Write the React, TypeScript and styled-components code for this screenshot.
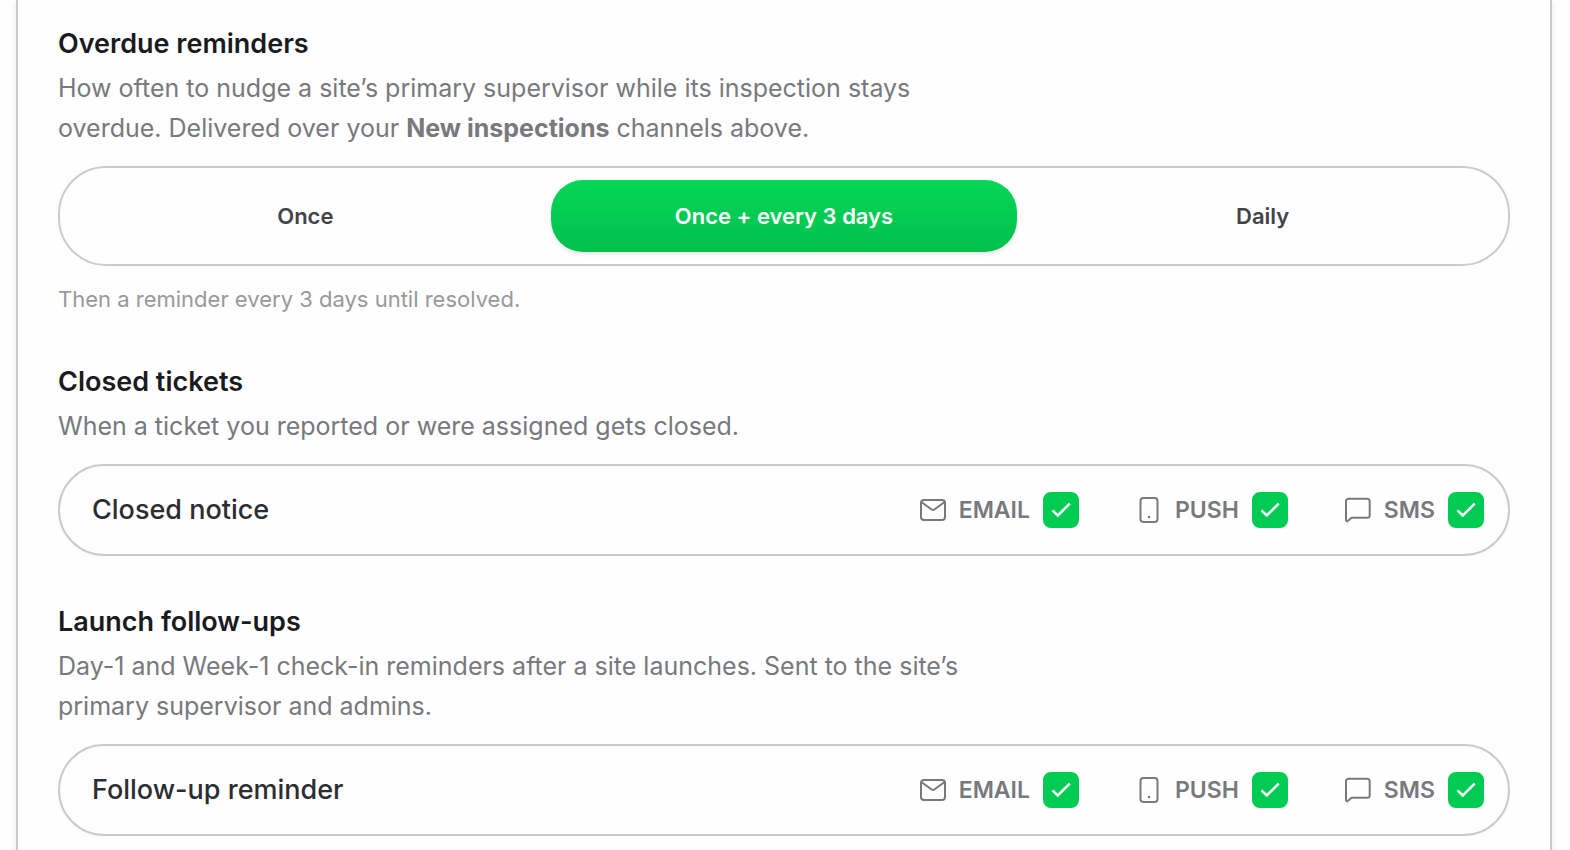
import React, { useState } from "react";
import styled, { createGlobalStyle } from "styled-components";

const GlobalStyle = createGlobalStyle`
  *, *::before, *::after { box-sizing: border-box; }
  body {
    margin: 0;
    background: #fefefe;
    color: #1a1b1e;
    font-family: Inter, "Liberation Sans", sans-serif;
  }
`;

const Page = styled.main`
  padding: 0 18px 0 16px;
`;

const Card = styled.div`
  display: flex;
  flex-direction: column;
  gap: 48px;
  min-height: 100vh;
  padding: 26px 40px 14px;
  border: solid #cacbce;
  border-width: 0 2px;
  background: #fefefe;
  box-shadow: 0 2px 6px rgba(0, 0, 0, 0.1);
`;

const Section = styled.section`
  display: flex;
  flex-direction: column;
`;

const Heading = styled.h2`
  margin: 0 0 6px;
  font-size: 27px;
  font-weight: 600;
  line-height: 36px;
`;

const Description = styled.p`
  max-width: 920px;
  margin: 0 0 18px;
  color: #77797d;
  font-size: 25px;
  line-height: 40px;

  strong { font-weight: 700; }
`;

const Hint = styled.p`
  margin: 16px 0 0;
  color: #98999b;
  font-size: 22px;
  line-height: 34px;
`;

const Segmented = styled.div`
  display: grid;
  grid-template-columns: repeat(3, 1fr);
  gap: 12px;
  padding: 12px;
  border: 2px solid #cacbce;
  border-radius: 48px;
`;

const HiddenRadio = styled.input`
  position: absolute;
  opacity: 0;
  pointer-events: none;
`;

const Segment = styled.label<{ $active: boolean }>`
  display: flex;
  align-items: center;
  justify-content: center;
  position: relative;
  height: 72px;
  border-radius: 32px;
  font-size: 22px;
  font-weight: 600;
  cursor: pointer;
  color: ${(p) => (p.$active ? "#fff" : "#424348")};
  background: ${(p) => (p.$active ? "linear-gradient(#05d658, #02c04d)" : "none")};
  box-shadow: ${(p) => (p.$active ? "0 2px 4px rgba(0, 0, 0, 0.1)" : "none")};
`;

const Row = styled.div`
  display: flex;
  align-items: center;
  justify-content: space-between;
  height: 92px;
  padding: 0 24px 0 32px;
  border: 2px solid #cacbce;
  border-radius: 46px;
`;

const RowTitle = styled.span`
  font-size: 27px;
  font-weight: 500;
  line-height: 36px;
  color: #2c2d32;
`;

const Channels = styled.div`
  display: flex;
  gap: 56px;
`;

const Channel = styled.label`
  display: flex;
  align-items: center;
  gap: 12px;
  color: #77797d;
  cursor: pointer;
`;

const ChannelName = styled.span`
  padding-right: 1px;
  font-size: 23px;
  font-weight: 600;
  line-height: 28px;
`;

const TickBox = styled.span`
  display: grid;
  width: 36px;
  height: 36px;

  > * { grid-area: 1 / 1; }
  svg { pointer-events: none; }
`;

const Tick = styled.input`
  appearance: none;
  width: 36px;
  height: 36px;
  margin: 0;
  border: 2px solid #cacbce;
  border-radius: 8px;
  cursor: pointer;

  &:checked {
    border-color: #02cb53;
    background: #02cb53;
  }
`;

const Icon = styled.svg`
  width: 28px;
  height: 28px;
  fill: none;
  stroke: currentColor;
  stroke-width: 2;
  stroke-linecap: round;
  stroke-linejoin: round;
`;

const MailIcon = () => (
  <Icon viewBox="0 0 28 28" aria-hidden="true">
    <rect x="2" y="4" width="24" height="20" rx="3" />
    <path d="M2.7 6.2l10 7.3q1.3.9 2.6 0l10-7.3" />
  </Icon>
);

const PhoneIcon = () => (
  <Icon viewBox="0 0 28 28" aria-hidden="true">
    <rect x="5.5" y="2" width="17" height="24" rx="3" />
    <path d="M14 21h.01" strokeWidth="2.5" />
  </Icon>
);

const ChatIcon = () => (
  <Icon viewBox="0 0 28 28" aria-hidden="true">
    <path d="M4.5 2.7h18.7a2.5 2.5 0 0 1 2.5 2.5v14a2.5 2.5 0 0 1-2.5 2.5H8.6a3 3 0 0 0-2 .8l-2.8 2.4A1.1 1.1 0 0 1 2 24.1V5.2a2.5 2.5 0 0 1 2.5-2.5z" />
  </Icon>
);

const channels = [
  { name: "EMAIL", Glyph: MailIcon },
  { name: "PUSH", Glyph: PhoneIcon },
  { name: "SMS", Glyph: ChatIcon },
];

const frequencies = ["Once", "Once + every 3 days", "Daily"];

function FrequencyPicker() {
  const [selected, setSelected] = useState(frequencies[1]);
  return (
    <Segmented role="radiogroup" aria-label="Overdue reminders">
      {frequencies.map((option) => (
        <Segment key={option} $active={option === selected}>
          <HiddenRadio
            type="radio"
            name="frequency"
            checked={option === selected}
            onChange={() => setSelected(option)}
          />
          {option}
        </Segment>
      ))}
    </Segmented>
  );
}

function ChannelRow({ title }: { title: string }) {
  const [off, setOff] = useState<string[]>([]);
  const toggle = (name: string) =>
    setOff(off.includes(name) ? off.filter((n) => n !== name) : [...off, name]);
  return (
    <Row role="group" aria-label={title}>
      <RowTitle>{title}</RowTitle>
      <Channels>
        {channels.map(({ name, Glyph }) => {
          const checked = !off.includes(name);
          return (
            <Channel key={name}>
              <Glyph />
              <ChannelName>{name}</ChannelName>
              <TickBox>
                <Tick type="checkbox" checked={checked} onChange={() => toggle(name)} />
                {checked && (
                  <svg viewBox="0 0 36 36" width="36" height="36" fill="none" stroke="#fff" strokeWidth="2.5" aria-hidden="true">
                    <path d="M9.5 18.3l5.3 5.2L26.7 11.7" />
                  </svg>
                )}
              </TickBox>
            </Channel>
          );
        })}
      </Channels>
    </Row>
  );
}

export default function App() {
  return (
    <>
      <GlobalStyle />
      <Page>
        <Card>
          <Section>
            <Heading>Overdue reminders</Heading>
            <Description>
              How often to nudge a site’s primary supervisor while its inspection stays overdue.
              Delivered over your <strong>New inspections</strong> channels above.
            </Description>
            <FrequencyPicker />
            <Hint>Then a reminder every 3 days until resolved.</Hint>
          </Section>
          <Section>
            <Heading>Closed tickets</Heading>
            <Description>When a ticket you reported or were assigned gets closed.</Description>
            <ChannelRow title="Closed notice" />
          </Section>
          <Section>
            <Heading>Launch follow-ups</Heading>
            <Description>
              Day-1 and Week-1 check-in reminders after a site launches. Sent to the site’s primary
              supervisor and admins.
            </Description>
            <ChannelRow title="Follow-up reminder" />
          </Section>
        </Card>
      </Page>
    </>
  );
}
